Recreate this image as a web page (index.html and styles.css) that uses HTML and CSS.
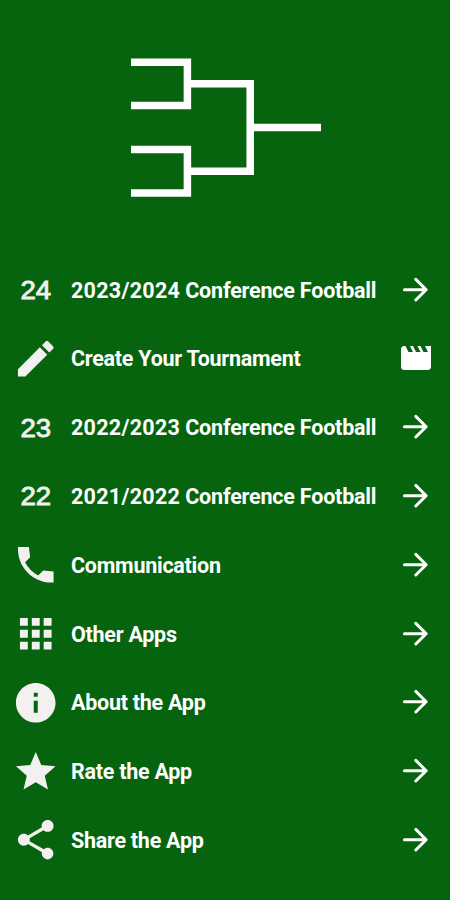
FILE: index.html
```html
<!DOCTYPE html>
<html lang="en">
<head>
    <meta charset="UTF-8">
    <meta name="viewport" content="width=device-width, initial-scale=1.0">
    <title>Conference Football</title>
    <link rel="stylesheet" href="styles.css">
</head>
<body>
    <!-- Shared icons -->
    <svg class="sprite" xmlns="http://www.w3.org/2000/svg">
        <symbol id="arrow" viewBox="0 0 36 36">
            <path d="M6.4 17.7H28M17.8 7.4L28.2 17.7L17.8 28" fill="none" stroke="#fff" stroke-width="3" stroke-linecap="round" stroke-linejoin="round"/>
        </symbol>
    </svg>

    <div class="container">
        <header class="logo">
            <svg class="bracket" viewBox="0 0 190 139">
                <path d="M0 4.3H56.4V47.6H0M0 91.4H56.4V135H0M60 25.8H119.2V113.2H60M119 69.6H190" fill="none" stroke="#fff" stroke-width="7.5"/>
            </svg>
        </header>

        <nav class="menu">
            <div class="item">
                <span class="icon number">24</span>
                <span class="label season"><span class="years">2023/2024</span> Conference Football</span>
                <svg class="action"><use href="#arrow"/></svg>
            </div>
            <div class="item">
                <svg class="icon" viewBox="0 0 24 24"><path d="M3 17.25V21h3.75L17.81 9.94l-3.75-3.75L3 17.25zM20.71 7.04a1 1 0 0 0 0-1.41l-2.34-2.34a1 1 0 0 0-1.41 0l-1.83 1.83 3.75 3.75 1.83-1.83z"/></svg>
                <span class="label">Create Your Tournament</span>
                <svg class="action movie" viewBox="0 0 24 24"><path d="M18 4l2 4h-3l-2-4h-2l2 4h-3l-2-4H8l2 4H7L5 4H4c-1.1 0-1.99.9-1.99 2L2 18c0 1.1.9 2 2 2h16c1.1 0 2-.9 2-2V4h-4z"/></svg>
            </div>
            <div class="item">
                <span class="icon number">23</span>
                <span class="label season"><span class="years">2022/2023</span> Conference Football</span>
                <svg class="action"><use href="#arrow"/></svg>
            </div>
            <div class="item">
                <span class="icon number">22</span>
                <span class="label season"><span class="years">2021/2022</span> Conference Football</span>
                <svg class="action"><use href="#arrow"/></svg>
            </div>
            <div class="item">
                <svg class="icon" viewBox="0 0 24 24"><path d="M21 15.46l-5.27-.61-2.52 2.52a15.05 15.05 0 0 1-6.59-6.59l2.53-2.53L8.54 3H3.03C2.45 13.18 10.82 21.55 21 20.97v-5.51z"/></svg>
                <span class="label">Communication</span>
                <svg class="action"><use href="#arrow"/></svg>
            </div>
            <div class="item">
                <svg class="icon" viewBox="0 0 24 24"><path d="M4 8h4V4H4v4zm6 12h4v-4h-4v4zm-6 0h4v-4H4v4zm0-6h4v-4H4v4zm6 0h4v-4h-4v4zm6-10v4h4V4h-4zm-6 4h4V4h-4v4zm6 6h4v-4h-4v4zm0 6h4v-4h-4v4z"/></svg>
                <span class="label">Other Apps</span>
                <svg class="action"><use href="#arrow"/></svg>
            </div>
            <div class="item">
                <svg class="icon" viewBox="0 0 24 24"><path d="M12 2C6.48 2 2 6.48 2 12s4.48 10 10 10 10-4.48 10-10S17.52 2 12 2zm1 15h-2v-6h2v6zm0-8h-2V7h2v2z"/></svg>
                <span class="label">About the App</span>
                <svg class="action"><use href="#arrow"/></svg>
            </div>
            <div class="item">
                <svg class="icon" viewBox="0 0 24 24"><path d="M12 17.27L18.18 21l-1.64-7.03L22 9.24l-7.19-.61L12 2 9.19 8.63 2 9.24l5.46 4.73L5.82 21z"/></svg>
                <span class="label">Rate the App</span>
                <svg class="action"><use href="#arrow"/></svg>
            </div>
            <div class="item">
                <svg class="icon" viewBox="0 0 24 24"><path d="M18 16.08c-.76 0-1.44.3-1.96.77L8.91 12.7c.05-.23.09-.46.09-.7s-.04-.47-.09-.7l7.05-4.11c.54.5 1.25.81 2.04.81 1.66 0 3-1.34 3-3s-1.34-3-3-3-3 1.34-3 3c0 .24.04.47.09.7L8.04 9.81C7.5 9.31 6.79 9 6 9c-1.66 0-3 1.34-3 3s1.34 3 3 3c.79 0 1.5-.31 2.04-.81l7.12 4.16c-.05.21-.08.43-.08.65 0 1.61 1.31 2.92 2.92 2.92s2.92-1.31 2.92-2.92-1.31-2.92-2.92-2.92z"/></svg>
                <span class="label">Share the App</span>
                <svg class="action"><use href="#arrow"/></svg>
            </div>
        </nav>
    </div>
</body>
</html>
```

FILE: styles.css
```css
body {
    font-family: Roboto, sans-serif;
    background-color: #05640d;
    color: #fff;
    margin: 0;
    padding: 0;
}

.sprite {
    display: none;
}

.container {
    box-sizing: border-box;
    height: 900px;
    padding: 58px 16px 0 12px;
    overflow: hidden;
}

.logo {
    display: flex;
    height: 197.3px;
    padding-left: 118.5px;
}

.bracket {
    width: 190px;
    height: 139px;
}

.menu {
    display: grid;
    grid-auto-rows: 68.8px;
}

.item {
    display: flex;
    align-items: center;
}

.icon {
    flex: none;
    width: 47.5px;
    height: 47.5px;
    fill: #f3f1ef;
}

.number {
    font-family: "Liberation Sans", sans-serif;
    font-size: 26px;
    font-weight: 400;
    line-height: 48.5px;
    text-align: center;
    color: #f3f1ef;
    -webkit-text-stroke: 0.9px #f3f1ef;
    transform: scaleX(1.06);
}

.label {
    flex: 1;
    margin-left: 11.5px;
    padding-top: 1px;
    font-size: 21.5px;
    font-weight: 700;
    letter-spacing: -0.26px;
    white-space: nowrap;
}

.season {
    letter-spacing: -0.2px;
}

.years {
    letter-spacing: 0.27px;
}

.action {
    flex: none;
    width: 36px;
    height: 36px;
}

.movie {
    fill: #fff;
}
```
